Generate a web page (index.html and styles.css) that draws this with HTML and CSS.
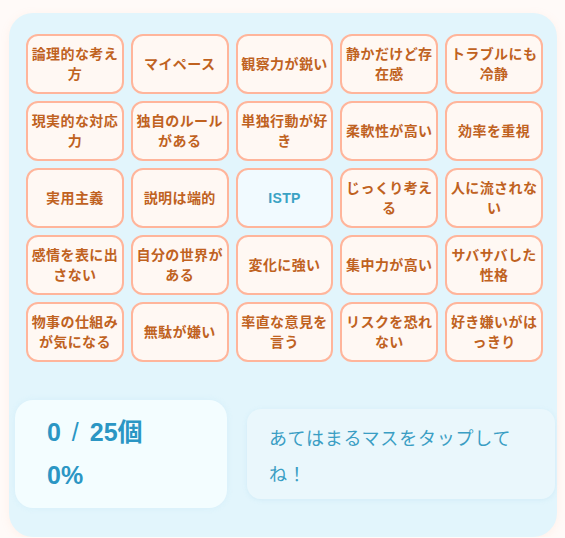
FILE: index.html
```html
<!DOCTYPE html>
<html lang="ja">
<head>
<meta charset="utf-8">
<link rel="stylesheet" href="styles.css">
</head>
<body>
<div class="board">
  <div class="grid">
    <div class="cell">論理的な考え方</div>
    <div class="cell">マイペース</div>
    <div class="cell">観察力が鋭い</div>
    <div class="cell">静かだけど存在感</div>
    <div class="cell">トラブルにも冷静</div>
    <div class="cell">現実的な対応力</div>
    <div class="cell">独自のルールがある</div>
    <div class="cell">単独行動が好き</div>
    <div class="cell">柔軟性が高い</div>
    <div class="cell">効率を重視</div>
    <div class="cell">実用主義</div>
    <div class="cell">説明は端的</div>
    <div class="cell center">ISTP</div>
    <div class="cell">じっくり考える</div>
    <div class="cell">人に流されない</div>
    <div class="cell">感情を表に出さない</div>
    <div class="cell">自分の世界がある</div>
    <div class="cell">変化に強い</div>
    <div class="cell">集中力が高い</div>
    <div class="cell">サバサバした性格</div>
    <div class="cell">物事の仕組みが気になる</div>
    <div class="cell">無駄が嫌い</div>
    <div class="cell">率直な意見を言う</div>
    <div class="cell">リスクを恐れない</div>
    <div class="cell">好き嫌いがはっきり</div>
  </div>
  <div class="footer">
    <div class="stats">
      <div class="stat-line">0 <span class="slash">/</span> 25個</div>
      <div class="stat-line">0%</div>
    </div>
    <div class="message">あてはまるマスをタップしてね！</div>
  </div>
</div>
</body>
</html>
```

FILE: styles.css
```css
html, body {
  margin: 0;
  padding: 0;
  background: #fffaf8;
}
body {
  font-family: "Liberation Sans", "Noto Sans CJK JP", sans-serif;
}
.board {
  margin: 13px 8px 0 9px;
  width: 548px;
  height: 524px;
  box-sizing: border-box;
  background: #e2f5fc;
  border-radius: 24px;
  padding: 21px 0 0 0;
  box-shadow: 0 2px 10px rgba(255, 170, 130, 0.12);
}
.grid {
  margin-left: 17px;
  width: 517px;
  display: grid;
  grid-template-columns: repeat(5, 1fr);
  grid-auto-rows: 60px;
  gap: 7px;
}
.cell {
  box-sizing: border-box;
  background: #fff8f3;
  border: 2px solid #ffb59b;
  border-radius: 12px;
  display: flex;
  align-items: center;
  justify-content: center;
  text-align: center;
  padding: 0 3px;
  color: #c0621f;
  font-weight: 700;
  font-size: 14px;
  letter-spacing: 0.4px;
  line-height: 20px;
}
.cell.center {
  background: #f1faff;
  color: #3ba2c4;
}
.footer {
  margin: 38px 2px 0 6px;
  display: flex;
  align-items: center;
  gap: 20px;
}
.stats {
  width: 212px;
  height: 108px;
  box-sizing: border-box;
  flex: none;
  background: #f3fdff;
  border-radius: 18px;
  padding: 11px 32px;
  box-shadow: 0 0 6px rgba(120, 200, 230, 0.12);
}
.stat-line {
  font-size: 25px;
  font-weight: 700;
  line-height: 43px;
  color: #2b96c4;
  word-spacing: 4px;
}
.slash {
  font-weight: 400;
}
.message {
  flex: 1;
  height: 90px;
  box-sizing: border-box;
  background: #eaf7fc;
  border-radius: 14px;
  padding: 10px 36px 8px 22px;
  font-family: "Noto Sans CJK JP", sans-serif;
  font-size: 18px;
  letter-spacing: 0.8px;
  line-height: 36px;
  color: #3a9ec4;
  font-weight: 400;
  box-shadow: 0 1px 5px rgba(120, 190, 220, 0.15);
}
```
